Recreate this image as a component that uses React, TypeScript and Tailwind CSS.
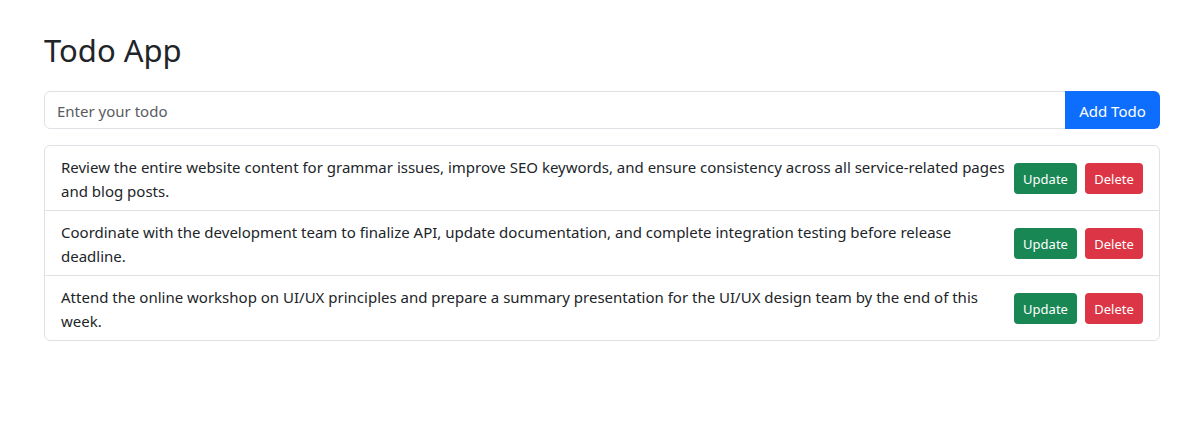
const todos: string[] = [
  'Review the entire website content for grammar issues, improve SEO keywords, and ensure consistency across all service-related pages and blog posts.',
  'Coordinate with the development team to finalize API, update documentation, and complete integration testing before release deadline.',
  'Attend the online workshop on UI/UX principles and prepare a summary presentation for the UI/UX design team by the end of this week.',
];

function TodoItem({ text }: { text: string }) {
  return (
    <li className="flex items-center justify-between gap-2 border-b border-[#dee2e6] px-4 last:border-b-0">
      <span className="pt-[9px] pb-[7px] leading-6">{text}</span>
      <div className="flex shrink-0 gap-2 text-[13px]">
        <button type="button" className="w-[63px] rounded bg-[#198754] pt-[6px] pb-1 leading-[21px] text-white hover:bg-[#157347]">
          Update
        </button>
        <button type="button" className="w-[58px] rounded bg-[#dc3545] pt-[6px] pb-1 leading-[21px] text-white hover:bg-[#bb2d3b]">
          Delete
        </button>
      </div>
    </li>
  );
}

export default function App() {
  return (
    <main className="mx-auto max-w-[1140px] pt-[31px] pr-[11px] pl-[13px] font-['Noto_Sans','Open_Sans',sans-serif] text-[15px] text-[#212529]">
      <h1 className="mb-[22px] text-[31px] leading-[38px]">Todo App</h1>
      <form className="mb-4 flex" onSubmit={(e) => e.preventDefault()}>
        <input
          type="text"
          aria-label="Todo"
          placeholder="Enter your todo"
          className="h-[38px] min-w-0 grow rounded-l-md border border-[#dee2e6] px-3 pt-px placeholder:text-[#595c5f]"
        />
        <button type="submit" className="-ml-px h-[38px] w-[95px] rounded-r-md bg-[#0d6efd] pt-[3px] text-white hover:bg-[#0b5ed7]">
          Add Todo
        </button>
      </form>
      <ul className="rounded-md border border-[#dee2e6]">
        {todos.map((text) => (
          <TodoItem key={text} text={text} />
        ))}
      </ul>
    </main>
  );
}
